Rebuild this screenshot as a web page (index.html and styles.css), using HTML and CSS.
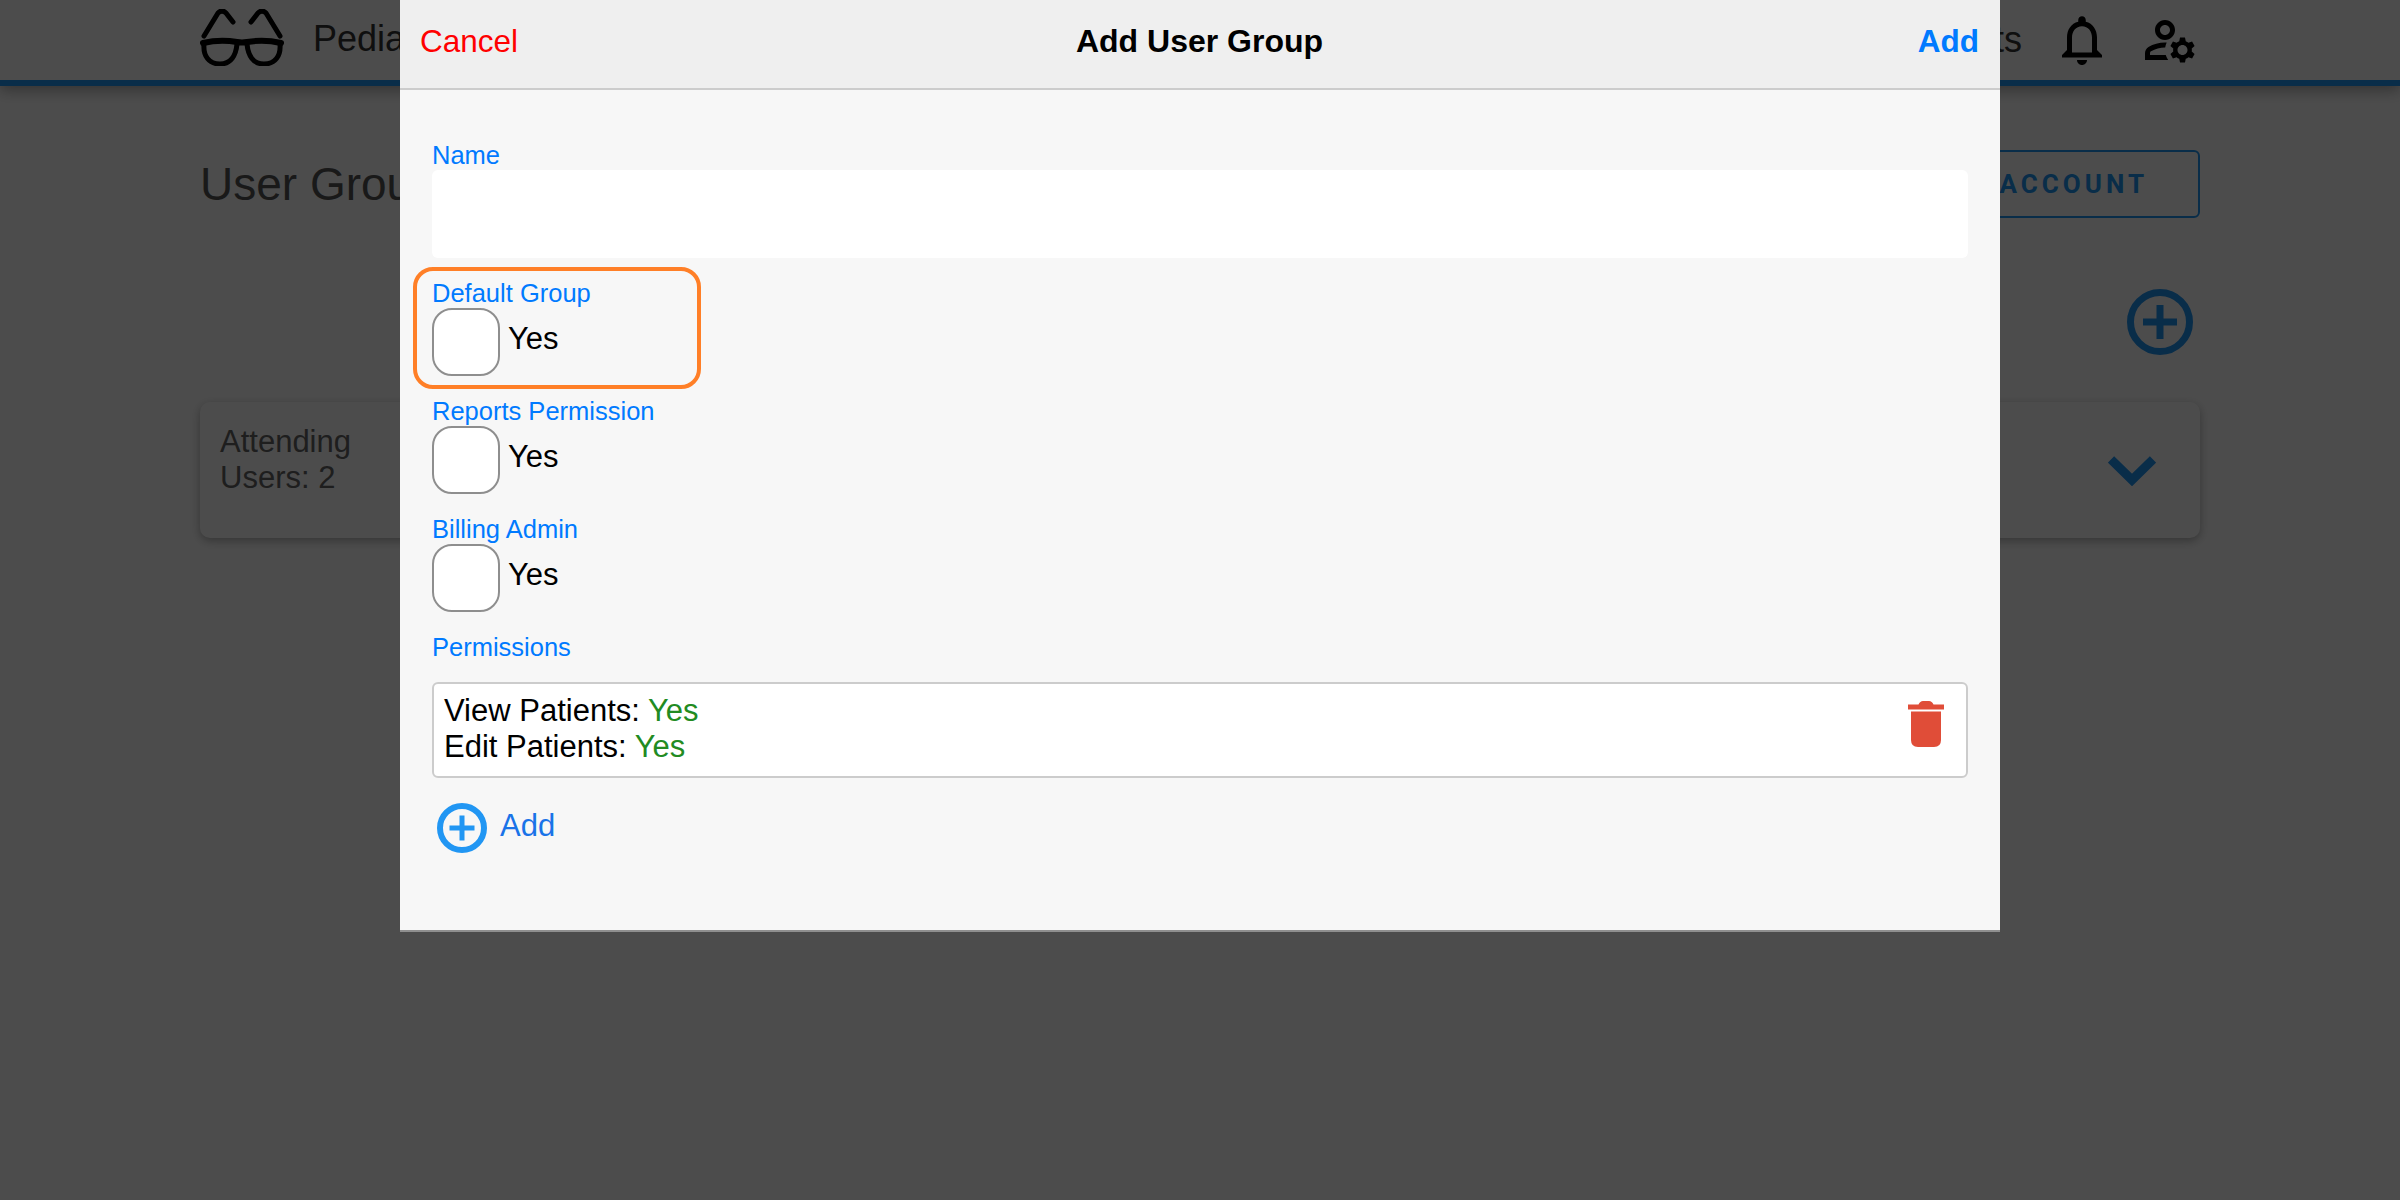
FILE: index.html
```html
<!DOCTYPE html>
<html lang="en">
<head>
<meta charset="utf-8">
<title>Add User Group</title>
<link rel="stylesheet" href="styles.css">
</head>
<body>
<div class="page">
  <header class="nav">
    <div class="brand">
      <svg class="logo" viewBox="0 0 84 57" fill="none" stroke="#000" stroke-linecap="round" stroke-linejoin="round">
        <path stroke-width="6" d="M3 34 Q20 30 37 33 Q42 34 47 33 Q64 30 81 34"/>
        <path stroke-width="5" d="M4 35 C3 47 9 55 20 55 C31 55 36 46 37 35"/>
        <path stroke-width="5" d="M47 35 C48 46 53 55 64 55 C75 55 81 47 80 35"/>
        <path stroke-width="5" d="M4 27 L18 4 Q22 0 26 4 L33 13"/>
        <path stroke-width="5" d="M80 27 L66 4 Q62 0 58 4 L51 13"/>
      </svg>
      <span class="brand-name">Pediatric Eye Care</span>
    </div>
    <div class="nav-right">
      <span class="nav-link">Patients</span>
      <svg class="bell" viewBox="0 0 24 24"><path d="M12 22c1.1 0 2-.9 2-2h-4c0 1.1.9 2 2 2zm6-6v-5c0-3.07-1.63-5.64-4.5-6.32V4c0-.83-.67-1.5-1.5-1.5s-1.5.67-1.5 1.5v.68C7.64 5.36 6 7.92 6 11v5l-2 2v1h16v-1l-2-2zm-2 1H8v-6c0-2.48 1.51-4.5 4-4.5s4 2.02 4 4.5v6z"/></svg>
      <svg class="account" viewBox="0 0 24 24"><path d="M4 18v-.65c0-.34.16-.66.41-.81C6.1 15.53 8.03 15 10 15c.03 0 .05 0 .08.01.1-.7.3-1.37.59-1.98-.22-.02-.44-.03-.67-.03-2.42 0-4.68.67-6.61 1.82-.88.52-1.39 1.5-1.39 2.53V20h9.26c-.42-.6-.75-1.28-.97-2H4zM10 12c2.21 0 4-1.79 4-4s-1.79-4-4-4-4 1.79-4 4 1.79 4 4 4zm0-6c1.1 0 2 .9 2 2s-.9 2-2 2-2-.9-2-2 .9-2 2-2zM20.75 16c0-.22-.03-.42-.06-.63l1.14-1.01-1-1.73-1.45.49c-.32-.27-.68-.48-1.08-.63L18 11h-2l-.3 1.49c-.4.15-.76.36-1.08.63l-1.45-.49-1 1.73 1.14 1.01c-.03.21-.06.41-.06.63s.03.42.06.63l-1.14 1.01 1 1.73 1.45-.49c.32.27.68.48 1.08.63L16 21h2l.3-1.49c.4-.15.76-.36 1.08-.63l1.45.49 1-1.73-1.14-1.01c.03-.21.06-.41.06-.63zM17 18c-1.1 0-2-.9-2-2s.9-2 2-2 2 .9 2 2-.9 2-2 2z"/></svg>
    </div>
  </header>
  <main class="main">
    <div class="title-row">
      <h1 class="title">User Groups</h1>
      <button class="outline-btn" type="button">NEW ACCOUNT</button>
    </div>
    <div class="add-row">
      <svg class="add-circle" viewBox="0 0 66 66" fill="none" stroke="#2196f3"><circle cx="33" cy="33" r="29.5" stroke-width="7"/><path stroke-width="7" d="M16 33H50M33 16V50"/></svg>
    </div>
    <section class="card">
      <div class="card-text">Attending<br>Users: 2</div>
      <svg class="chevron" viewBox="0 0 48 30" fill="none" stroke="#2196f3"><path stroke-width="9" d="M3 3.5L24 24L45 3.5"/></svg>
    </section>
  </main>
</div>
<div class="overlay"></div>
<div class="modal">
  <div class="modal-head">
    <a class="cancel">Cancel</a>
    <strong class="modal-title">Add User Group</strong>
    <a class="confirm">Add</a>
  </div>
  <form class="modal-body">
    <label class="label">Name</label>
    <div class="input"></div>
    <div class="field field-marked">
      <label class="label">Default Group</label>
      <div class="check-row"><span class="check"></span><span class="check-text">Yes</span></div>
      <div class="marker"></div>
    </div>
    <div class="field">
      <label class="label">Reports Permission</label>
      <div class="check-row"><span class="check"></span><span class="check-text">Yes</span></div>
    </div>
    <div class="field">
      <label class="label">Billing Admin</label>
      <div class="check-row"><span class="check"></span><span class="check-text">Yes</span></div>
    </div>
    <label class="label">Permissions</label>
    <div class="perm-box">
      <div class="perm-text">
        <div>View Patients: <span class="yes">Yes</span></div>
        <div>Edit Patients: <span class="yes">Yes</span></div>
      </div>
      <svg class="trash" viewBox="0 0 36 46"><path d="M0 3.5H10.5Q12 0 15 0H21Q24 0 25.5 3.5H36V8.5H0Z"/><path d="M3 10.5H33V39Q33 46 26 46H10Q3 46 3 39Z"/></svg>
    </div>
    <div class="add-perm">
      <svg class="add-perm-icon" viewBox="0 0 50 50" fill="none" stroke="#2196f3"><circle cx="25" cy="25" r="22" stroke-width="6"/><path stroke-width="5" d="M12.5 25H37.5M25 12.5V37.5"/></svg>
      <span class="add-perm-text">Add</span>
    </div>
  </form>
</div>
</body>
</html>
```
FILE: styles.css
```css
* { box-sizing: border-box; }
html, body { margin: 0; height: 100%; overflow: hidden; background: #fff; }
body { font-family: "Liberation Sans", Arial, sans-serif; }

.page { width: 2400px; height: 1200px; }

.nav {
  height: 86px;
  padding: 0 200px;
  display: flex;
  justify-content: space-between;
  align-items: center;
  border-bottom: 6px solid #2196f3;
  box-shadow: 0 4px 14px rgba(0, 0, 0, .35);
}
.brand { display: flex; align-items: center; gap: 29px; padding-bottom: 2px; }
.logo { width: 84px; height: 57px; display: block; margin-top: -3px; }
.brand-name, .nav-link { font-size: 36px; color: #333; }
.nav-right { display: flex; align-items: center; }
.nav-link { margin-right: 30px; }
.bell { width: 60px; height: 60px; margin-right: 28px; }
.account { width: 60px; height: 60px; }

.main { padding: 64px 200px 0; }
.title-row { display: flex; justify-content: space-between; align-items: center; }
.title { margin: 0; font-size: 46px; font-weight: 400; color: #555; }
.outline-btn {
  height: 68px;
  padding: 0 50px 0 40px;
  background: none;
  border: 2px solid #2196f3;
  border-radius: 6px;
  font-family: Roboto, sans-serif;
  font-size: 26px;
  font-weight: 700;
  letter-spacing: 4px;
  color: #2196f3;
}
.add-row { display: flex; justify-content: flex-end; padding: 71px 7px 47px 0; }
.add-circle { width: 66px; height: 66px; display: block; }
.card {
  height: 136px;
  padding: 22px 44px 0 20px;
  display: flex;
  justify-content: space-between;
  align-items: flex-start;
  border-radius: 10px;
  box-shadow: 0 3px 10px rgba(0, 0, 0, .3);
}
.card-text { font-size: 31px; line-height: 36px; color: #666; }
.chevron { width: 48px; height: 30px; margin-top: 32px; }

.overlay { position: fixed; inset: 0; background: rgba(0, 0, 0, .7); }

.modal {
  position: absolute;
  top: 0;
  left: 400px;
  width: 1600px;
  background: #f7f7f7;
  border-bottom: 2px solid #8f8f8f;
}
.modal-head {
  height: 90px;
  padding: 0 21px 6px 20px;
  display: grid;
  grid-template-columns: 1fr auto 1fr;
  align-items: center;
  font-size: 31.5px;
  background: #efefef;
  border-bottom: 2px solid #ccc;
}
.cancel { color: #ff0000; }
.modal-title { color: #000; font-size: 32px; }
.confirm { color: #007aff; font-weight: 700; justify-self: end; }

.modal-body { padding: 50px 32px 77px; }
.label { display: block; height: 30px; line-height: 30px; font-size: 25.5px; color: #007aff; }
.input { height: 88px; margin-bottom: 20px; background: #fff; border-radius: 6px; }
.field { height: 118px; }
.field-marked { position: relative; }
.marker {
  position: absolute;
  left: -19px;
  top: -11px;
  width: 288px;
  height: 122px;
  border: 4px solid #ff7f27;
  border-radius: 20px;
}
.check-row { display: flex; align-items: center; gap: 8px; }
.check {
  width: 68px;
  height: 68px;
  background: #fff;
  border: 2px solid #8e8e8e;
  border-radius: 20px;
}
.check-text { font-size: 31px; color: #000; padding-bottom: 7px; }

.perm-box {
  margin-top: 20px;
  height: 96px;
  padding: 9px 22px 11px 10px;
  display: flex;
  justify-content: space-between;
  align-items: flex-start;
  background: #fff;
  border: 2px solid #ccc;
  border-radius: 6px;
}
.perm-text { font-size: 31px; line-height: 36px; color: #000; }
.yes { color: #228b22; }
.trash { width: 36px; height: 46px; margin-top: 8px; fill: #e04d38; }
.add-perm { display: flex; align-items: center; gap: 13px; margin-top: 25px; padding-left: 5px; }
.add-perm-icon { width: 50px; height: 50px; display: block; }
.add-perm-text { font-size: 31px; color: #1a73e8; padding-bottom: 5px; }
```
